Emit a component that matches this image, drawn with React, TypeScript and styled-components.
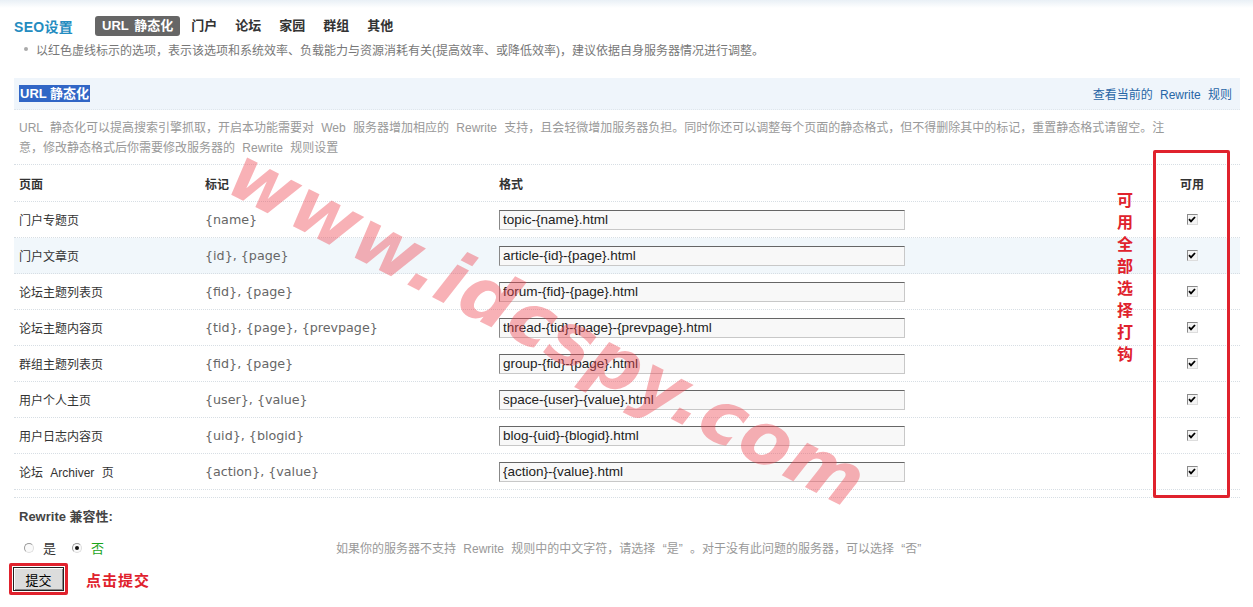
import { createGlobalStyle, styled } from 'styled-components'

const GlobalStyle = createGlobalStyle`
  body {
    margin: 0;
    background: #fff;
    color: #333;
    font: 12px 'Liberation Sans', 'Noto Sans CJK SC', sans-serif;
  }
`

const Page = styled.div`
  position: relative;
  width: 1253px;
  height: 607px;
  overflow: hidden;
`

const TopStrip = styled.div`
  height: 8px;
  background: linear-gradient(#e9f0f6, #fff);
`

const Content = styled.div`
  padding: 0 13px 0 14px;
`

const Nav = styled.div`
  display: flex;
  align-items: center;
  height: 20px;
  margin-top: 8px;
`

const NavTitle = styled.div`
  font-size: 14px;
  font-weight: 700;
  color: #238cc0;
  margin-right: 22px;
  letter-spacing: 0.3px;
`

const Tab = styled.div<{ $active?: boolean }>`
  height: 20px;
  line-height: 20px;
  padding: 0 7px;
  margin-right: 4px;
  border-radius: 3px;
  font-size: 13px;
  font-weight: 700;
  word-spacing: 2px;
  background: ${(p) => (p.$active ? '#666' : 'transparent')};
  color: ${(p) => (p.$active ? '#fff' : '#333')};
`

const Tip = styled.div`
  display: flex;
  align-items: center;
  height: 14px;
  margin-top: 6px;
  padding-left: 10px;
  color: #777;
  font-size: 12px;
  &::before {
    content: '';
    width: 4px;
    height: 4px;
    border-radius: 2px;
    background: #aaa;
    margin-right: 8px;
  }
`

const SectionHead = styled.div`
  display: flex;
  align-items: center;
  justify-content: space-between;
  height: 31px;
  margin-top: 22px;
  padding: 0 8px 0 5px;
  background: #eff5fb;
  border-bottom: 1px dotted #dfe6ec;
`

const SectionTitle = styled.span`
  background: #3166c6;
  color: #fff;
  font-size: 13px;
  font-weight: 700;
  padding: 1px 1px;
  line-height: 15px;
`

const HeadLink = styled.a`
  color: #2766a6;
  font-size: 12px;
  word-spacing: 4px;
  text-decoration: none;
`

const Desc = styled.div`
  padding: 8px 5px 6px;
  line-height: 20px;
  color: #999;
  font-size: 12px;
  word-spacing: 4px;
  white-space: nowrap;
  border-bottom: 1px dotted #d7dee4;
`

const Row = styled.div<{ $alt?: boolean; $head?: boolean }>`
  display: grid;
  grid-template-columns: 186px 294px 1fr 80px;
  align-items: center;
  height: ${(p) => (p.$head ? '36px' : '35px')};
  padding-right: 8px;
  background: ${(p) => (p.$alt ? '#f1f7fb' : 'transparent')};
  border-bottom: 1px dotted #d7dee4;
  font-weight: ${(p) => (p.$head ? 700 : 400)};
  font-size: 12px;
  word-spacing: 4px;
`

const Cell = styled.div<{ $center?: boolean; $muted?: boolean }>`
  padding-left: ${(p) => (p.$center ? 0 : '5px')};
  color: ${(p) => (p.$muted ? '#666' : '#333')};
  font-family: ${(p) => (p.$muted ? "'DejaVu Sans', sans-serif" : 'inherit')};
  font-size: ${(p) => (p.$muted ? '12.7px' : 'inherit')};
  word-spacing: ${(p) => (p.$muted ? '0' : 'inherit')};
  display: flex;
  justify-content: ${(p) => (p.$center ? 'center' : 'flex-start')};
`

const FormatInput = styled.input`
  width: 406px;
  height: 20px;
  box-sizing: border-box;
  padding: 0 3px;
  border: 1px solid #c8c8c8;
  border-top-color: #666;
  border-left-color: #888;
  background: #f8f8f8;
  color: #222;
  font: 13.5px 'Liberation Sans', sans-serif;
  outline: none;
`

const Check = styled.span`
  display: inline-flex;
  width: 11px;
  height: 11px;
  box-sizing: border-box;
  border: 1px solid #8a8a8a;
  border-right-color: #ddd;
  border-bottom-color: #ddd;
  background: #f4f4f4;
  align-items: center;
  justify-content: center;
`

const TableEnd = styled.div`
  height: 7px;
  border-bottom: 1px dotted #d7dee4;
`

const CompatTitle = styled.div`
  margin-top: 11px;
  padding-left: 5px;
  font-size: 13px;
  font-weight: 700;
  color: #444;
  line-height: 16px;
`

const RadioRow = styled.div`
  display: grid;
  grid-template-columns: 322px 1fr;
  align-items: center;
  margin-top: 13px;
  height: 16px;
`

const RadioGroup = styled.div`
  display: flex;
  align-items: center;
  padding-left: 10px;
`

const Radio = styled.span<{ $on?: boolean }>`
  position: relative;
  width: 10px;
  height: 10px;
  box-sizing: border-box;
  border-radius: 50%;
  border: 1px solid #999;
  border-right-color: #ddd;
  border-bottom-color: #ddd;
  background: #fafafa;
  margin-right: 9px;
  &::after {
    content: '';
    display: ${(p) => (p.$on ? 'block' : 'none')};
    position: absolute;
    left: 2px;
    top: 2px;
    width: 4px;
    height: 4px;
    border-radius: 50%;
    background: #111;
  }
`

const RadioLabel = styled.span<{ $on?: boolean }>`
  font-size: 13px;
  color: ${(p) => (p.$on ? '#1aa51a' : '#333')};
  margin-right: 16px;
`

const Help = styled.div`
  color: #999;
  font-size: 12px;
  word-spacing: 4px;
`

const SubmitRow = styled.div`
  display: flex;
  align-items: center;
  margin-top: 9px;
  margin-left: -5px;
`

const RedFrame = styled.div`
  display: inline-flex;
  padding: 1px;
  border: 3px solid #e0222d;
  border-radius: 2px;
`

const SubmitButton = styled.button`
  width: 51px;
  height: 24px;
  padding: 0;
  background: #dcdcdc;
  border: 1px solid #222;
  box-shadow: inset 1px 1px 0 #fff, inset -1px -1px 0 #888;
  color: #000;
  font: 13px 'Noto Sans CJK SC', sans-serif;
`

const Note = styled.span`
  margin-left: 18px;
  color: #e0222d;
  font: 700 15px 'Noto Sans CJK SC', serif;
  letter-spacing: 1px;
`

const ColumnFrame = styled.div`
  position: absolute;
  left: 1153px;
  top: 150px;
  width: 77px;
  height: 348px;
  box-sizing: border-box;
  border: 3px solid #e0222d;
  border-radius: 2px;
`

const VerticalNote = styled.div`
  position: absolute;
  left: 1116px;
  top: 188px;
  width: 18px;
  color: #e0222d;
  font: 700 16px/22px 'Noto Sans CJK SC', serif;
  text-align: center;
`

const Watermark = styled.div`
  position: absolute;
  left: 548px;
  top: 327px;
  transform: translate(-50%, -50%) rotate(27deg);
  white-space: nowrap;
  font: italic 700 74px 'DejaVu Sans', sans-serif;
  color: rgba(238, 70, 80, 0.42);
  pointer-events: none;
  letter-spacing: 1px;
`

const rows = [
  { page: '门户专题页', mark: '{name}', format: 'topic-{name}.html' },
  { page: '门户文章页', mark: '{id}, {page}', format: 'article-{id}-{page}.html' },
  { page: '论坛主题列表页', mark: '{fid}, {page}', format: 'forum-{fid}-{page}.html' },
  { page: '论坛主题内容页', mark: '{tid}, {page}, {prevpage}', format: 'thread-{tid}-{page}-{prevpage}.html' },
  { page: '群组主题列表页', mark: '{fid}, {page}', format: 'group-{fid}-{page}.html' },
  { page: '用户个人主页', mark: '{user}, {value}', format: 'space-{user}-{value}.html' },
  { page: '用户日志内容页', mark: '{uid}, {blogid}', format: 'blog-{uid}-{blogid}.html' },
  { page: '论坛 Archiver 页', mark: '{action}, {value}', format: '{action}-{value}.html' },
]

function CheckMark() {
  return (
    <Check>
      <svg width="8" height="7" viewBox="0 0 8 7">
        <path d="M1 3.2 L3 5.4 L7 1" fill="none" stroke="#000" strokeWidth="1.8" />
      </svg>
    </Check>
  )
}

export default function App() {
  return (
    <Page>
      <GlobalStyle />
      <TopStrip />
      <Content>
        <Nav>
          <NavTitle>SEO设置</NavTitle>
          <Tab $active>URL 静态化</Tab>
          <Tab>门户</Tab>
          <Tab>论坛</Tab>
          <Tab>家园</Tab>
          <Tab>群组</Tab>
          <Tab>其他</Tab>
        </Nav>
        <Tip>
          以红色虚线标示的选项，表示该选项和系统效率、负载能力与资源消耗有关(提高效率、或降低效率)，建议依据自身服务器情况进行调整。
        </Tip>
        <SectionHead>
          <SectionTitle>URL 静态化</SectionTitle>
          <HeadLink href="#">查看当前的 Rewrite 规则</HeadLink>
        </SectionHead>
        <Desc>
          URL 静态化可以提高搜索引擎抓取，开启本功能需要对 Web 服务器增加相应的 Rewrite
          支持，且会轻微增加服务器负担。同时你还可以调整每个页面的静态格式，但不得删除其中的标记，重置静态格式请留空。注
          <br />
          意，修改静态格式后你需要修改服务器的 Rewrite 规则设置
        </Desc>
        <Row $head>
          <Cell>页面</Cell>
          <Cell>标记</Cell>
          <Cell>格式</Cell>
          <Cell $center>可用</Cell>
        </Row>
        {rows.map((r, i) => (
          <Row key={r.page} $alt={i === 1}>
            <Cell>{r.page}</Cell>
            <Cell $muted>{r.mark}</Cell>
            <Cell>
              <FormatInput defaultValue={r.format} />
            </Cell>
            <Cell $center>
              <CheckMark />
            </Cell>
          </Row>
        ))}
        <TableEnd />
        <CompatTitle>Rewrite 兼容性:</CompatTitle>
        <RadioRow>
          <RadioGroup>
            <Radio />
            <RadioLabel>是</RadioLabel>
            <Radio $on />
            <RadioLabel $on>否</RadioLabel>
          </RadioGroup>
          <Help>如果你的服务器不支持 Rewrite 规则中的中文字符，请选择 “是” 。对于没有此问题的服务器，可以选择 “否”</Help>
        </RadioRow>
        <SubmitRow>
          <RedFrame>
            <SubmitButton>提交</SubmitButton>
          </RedFrame>
          <Note>点击提交</Note>
        </SubmitRow>
      </Content>
      <ColumnFrame />
      <VerticalNote>可用全部选择打钩</VerticalNote>
      <Watermark>www.idcspy.com</Watermark>
    </Page>
  )
}
